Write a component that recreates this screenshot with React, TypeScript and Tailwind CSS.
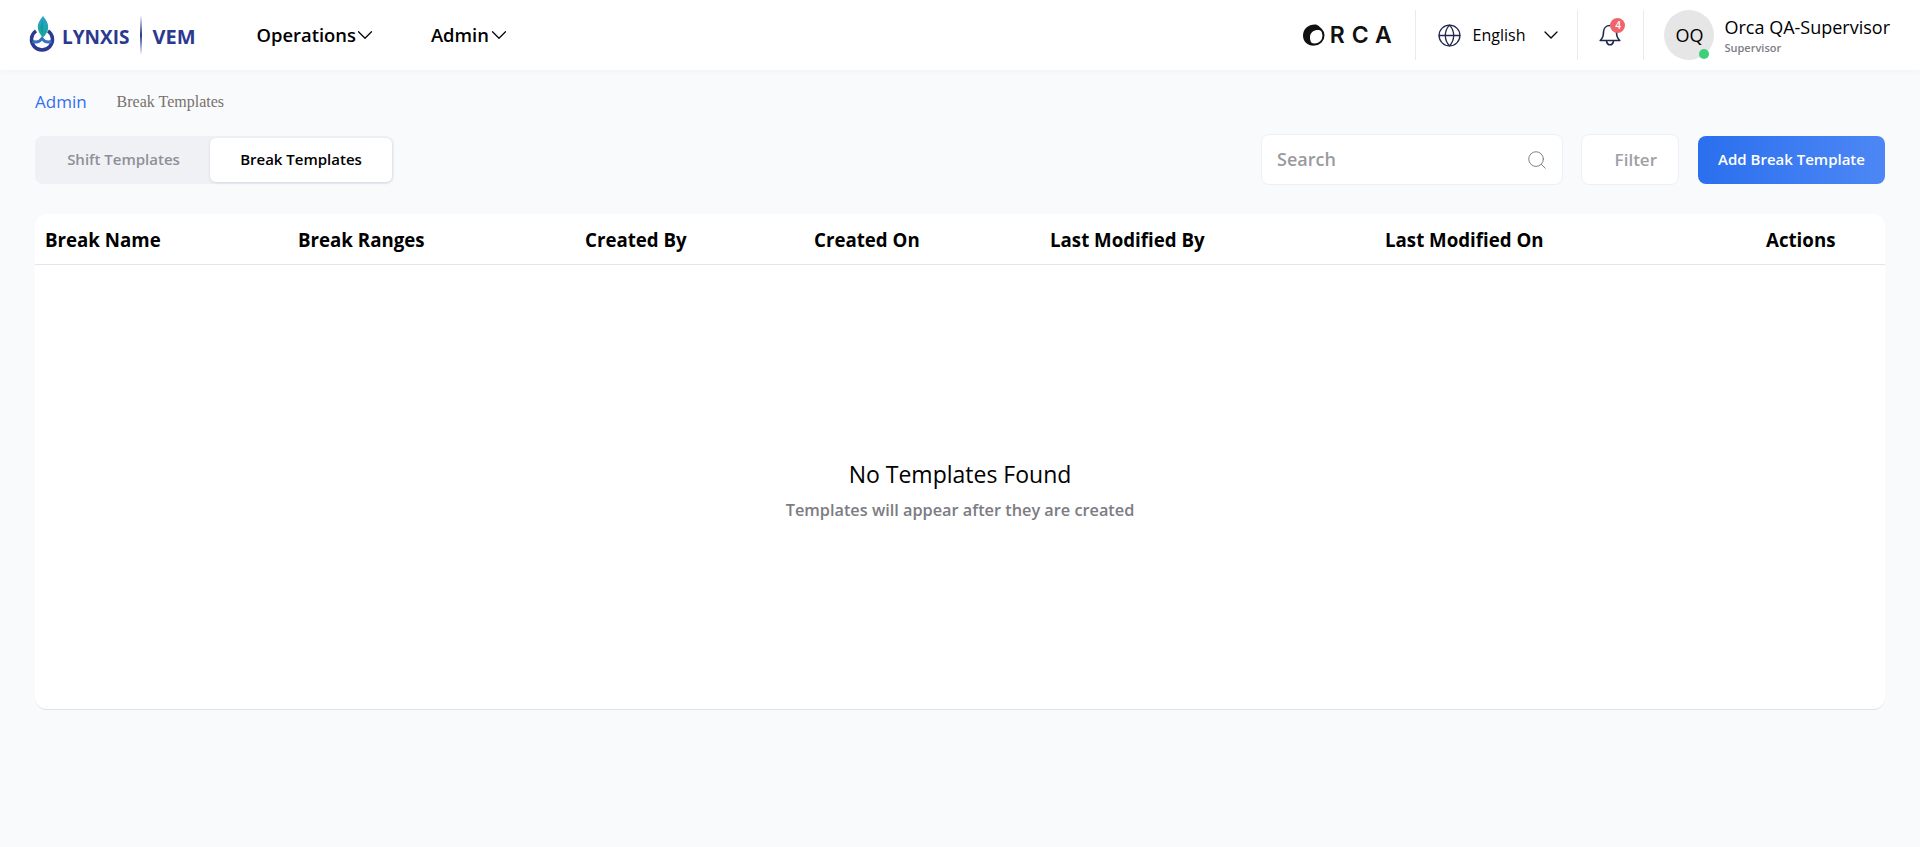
import { ChevronDown, Globe, Search } from "lucide-react";

const columns = [
  "Break Name",
  "Break Ranges",
  "Created By",
  "Created On",
  "Last Modified By",
  "Last Modified On",
  "Actions",
];

const LynxisLogo = () => (
  <div className="flex items-center">
    <svg width="30" height="40" viewBox="0 0 30 40" fill="none">
      <defs>
        <linearGradient id="drop" x1="0" y1="0" x2="0" y2="1">
          <stop offset="0" stopColor="#2f9fd0" />
          <stop offset="1" stopColor="#14a88f" />
        </linearGradient>
        <linearGradient id="rule" x1="0" y1="0" x2="0" y2="1">
          <stop offset="0" stopColor="#2b3990" stopOpacity="0" />
          <stop offset="0.5" stopColor="#2b3990" />
          <stop offset="1" stopColor="#2b3990" stopOpacity="0" />
        </linearGradient>
      </defs>
      <path d="M7 15.900A10.500 10.500 0 1 0 19 15.900" stroke="#2b3990" strokeWidth="3.500" />
      <path d="M3.500 26.500c4 1.200 7.500 0 9.500-3 2 3 5.500 4.200 9.500 3" stroke="#3a6fc0" strokeWidth="3" />
      <path d="M14 1c3.400 4 5.200 7.500 5.200 11 0 4-2.200 7.500-5.200 10.500-3-3-5.200-6.500-5.200-10.500C8.800 8.500 10.600 5 14 1z" fill="url(#drop)" />
      <path d="M14 5c-1.500 2.500-2.300 5-2.300 7.500 0 2.500.9 4.700 2.300 6.500z" fill="#0f9aa0" />
    </svg>
    <span className="ml-[3px] mt-[4px] text-[19px] font-bold leading-none text-[#2b3990]">LYNXIS</span>
    <svg width="2" height="40" className="mx-[11px]">
      <rect width="2" height="40" fill="url(#rule)" />
    </svg>
    <span className="-ml-[1px] mt-[4px] text-[20px] font-bold leading-none text-[#2b3990]">VEM</span>
  </div>
);

const OrcaLogo = () => (
  <div className="flex items-center">
    <svg width="24" height="24" viewBox="0 0 24 24" fill="none">
      <circle cx="12.500" cy="12.500" r="9" stroke="#111" strokeWidth="2" />
      <path d="M14 1.500C7 1 1 5.500 1 12.500S6.500 23 12.500 22.500C9 20.500 7.500 17 8 13.500c.5-4 3.500-6.500 8-6.500 1.500 0 3 .5 4 1.500C19 5 17 2.500 14 1.500z" fill="#111" />
    </svg>
    <span className="ml-[4px] font-['Inter',sans-serif] text-[23px] font-semibold leading-none tracking-[0.3em] text-[#111]">
      RCA
    </span>
  </div>
);

const Bell = () => (
  <svg width="24" height="26" viewBox="0 0 24 26" fill="none" stroke="#1f2a4d" strokeWidth="1.600" strokeLinejoin="round" strokeLinecap="round">
    <path d="M12 3.500c-4 0-6.500 3-6.500 6.700 0 3.800-.8 6-3.300 8.300h19.600c-2.500-2.300-3.300-4.500-3.300-8.300 0-3.700-2.500-6.700-6.500-6.700z" />
    <path d="M8.500 19c.4 2.500 1.700 3.800 3.500 3.800s3.100-1.300 3.500-3.800" />
  </svg>
);

export default function App() {
  return (
    <div className="flex min-h-[847px] flex-col bg-[#f9fafc] font-['Open_Sans',sans-serif]">
      {/* Header */}
      <header className="flex h-[70px] items-center bg-white pl-[29px] pr-[30px] shadow-[0_1px_4px_rgba(30,40,80,0.04)]">
        <LynxisLogo />
        <nav className="ml-[61px] flex items-center gap-[53px]">
          <button className="flex items-center text-[18.4px] font-semibold text-black">
            Operations
            <ChevronDown size={26} strokeWidth={1.1} className="-ml-[4px] -my-1" />
          </button>
          <button className="flex items-center text-[18.4px] font-semibold text-black">
            Admin
            <ChevronDown size={26} strokeWidth={1.1} className="-ml-[3px] -my-1" />
          </button>
        </nav>

        <div className="ml-auto flex h-[50px] items-center">
          <OrcaLogo />
          <div className="ml-[16px] h-[50px] w-px bg-[#e8eaf2]" />
          <Globe size={25} strokeWidth={1.25} className="ml-[21px] text-[#1f2a4d]" />
          <span className="ml-[11px] text-[16px] text-black">English</span>
          <ChevronDown size={24} strokeWidth={1.25} className="ml-[14px] text-black" />
          <div className="ml-[14px] h-[50px] w-px bg-[#e8eaf2]" />
          <div className="relative ml-[20px]">
            <Bell />
            <span className="absolute -right-[3px] -top-[4px] flex h-[15px] w-[15px] items-center justify-center rounded-full bg-[#f0636b] text-[10px] font-semibold text-white">
              4
            </span>
          </div>
          <div className="ml-[21px] h-[50px] w-px bg-[#e8eaf2]" />
          <div className="relative ml-[20px] flex h-[50px] w-[50px] items-center justify-center rounded-full bg-[#e6e6e6] text-[18px] text-black">
            OQ
            <span className="absolute bottom-[1px] right-[5px] h-[10px] w-[10px] rounded-full bg-[#3ecf7c]" />
          </div>
          <div className="ml-[10px] flex flex-col">
            <span className="text-[18px] font-medium leading-[26px] text-black">Orca QA-Supervisor</span>
            <span className="text-[11px] font-semibold leading-[16px] text-[#7d7d85]">Supervisor</span>
          </div>
        </div>
      </header>

      <main className="flex flex-col px-[35px]">
        {/* Breadcrumb */}
        <div className="mt-[22px] flex h-[20px] items-center">
          <span className="text-[17px] text-[#3170ee]">Admin</span>
          <span className="ml-[30px] font-['Liberation_Serif',serif] text-[16px] text-[#77716c]">Break Templates</span>
        </div>

        {/* Toolbar */}
        <div className="mt-[22px] flex items-center">
          <div className="flex h-[48px] w-[359px] items-center rounded-lg bg-[#f0f1f5] p-[2px]">
            <button className="w-[173px] text-center text-[15px] font-semibold text-[#8f8f98]">Shift Templates</button>
            <button className="flex h-[44px] flex-1 items-center justify-center rounded-md bg-white text-[15px] font-semibold text-black shadow-[0_1px_3px_rgba(30,40,80,0.12)]">
              Break Templates
            </button>
          </div>

          <div className="ml-auto flex h-[51px] w-[302px] items-center justify-between rounded-lg border border-[#eef0f8] bg-white pl-[15px] pr-[14px]">
            <span className="text-[18px] font-semibold text-[#9a9a9e]">Search</span>
            <Search size={22} strokeWidth={1} className="text-[#77777c]" />
          </div>
          <button className="ml-[18px] flex h-[51px] w-[98px] items-center justify-end rounded-lg border border-[#eef0f8] bg-white pr-[21px] text-[17px] font-semibold text-[#a0a0a4]">
            Filter
          </button>
          <button className="ml-[19px] h-[48px] w-[187px] rounded-lg bg-gradient-to-r from-[#2a6fee] to-[#4d87f5] text-[15px] font-semibold text-white">
            Add Break Template
          </button>
        </div>

        {/* Table */}
        <section className="mt-[29px] flex h-[496px] flex-col rounded-xl border-b border-[#dfe1e6] bg-white">
          <div className="grid h-[51px] shrink-0 grid-cols-[253px_287px_229px_236px_335px_381px_1fr] items-center border-b border-[#e3e5ea] pl-[10px]">
            {columns.map((column) => (
              <span key={column} className="pt-[2px] text-[18.7px] font-bold text-black">
                {column}
              </span>
            ))}
          </div>
          <div className="flex flex-1 flex-col items-center justify-center pt-[5px]">
            <h2 className="text-[23px] font-medium leading-[30px] text-black">No Templates Found</h2>
            <p className="mt-[10px] text-[16.3px] font-semibold leading-[22px] text-[#7c7c84]">
              Templates will appear after they are created
            </p>
          </div>
        </section>
      </main>
    </div>
  );
}
